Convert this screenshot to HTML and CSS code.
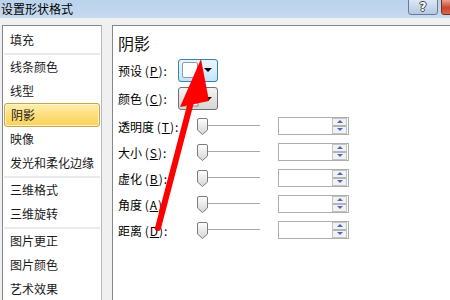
FILE: index.html
```html
<!DOCTYPE html>
<html lang="zh-CN">

<head>
    <meta charset="UTF-8">
    <meta name="viewport" content="width=device-width, initial-scale=1.0">
    <title>设置形状格式</title>
    <link rel="stylesheet" href="styles.css">
</head>

<body>
    <div class="titlebar">
        <span class="title">设置形状格式</span>
        <div class="caption">
            <span class="btn-help">?</span>
            <span class="btn-close"></span>
        </div>
    </div>

    <div class="dialog">
        <ul class="nav">
            <li>填充</li>
            <li class="sep"></li>
            <li>线条颜色</li>
            <li>线型</li>
            <li class="active">阴影</li>
            <li>映像</li>
            <li>发光和柔化边缘</li>
            <li class="sep"></li>
            <li>三维格式</li>
            <li>三维旋转</li>
            <li class="sep"></li>
            <li>图片更正</li>
            <li>图片颜色</li>
            <li>艺术效果</li>
        </ul>

        <div class="pane">
            <h2>阴影</h2>

            <div class="row row-preset">
                <label>预设 <span class="key">(<u>P</u>)</span>:</label>
                <div class="drop drop-blue">
                    <span class="swatch"></span>
                    <span class="caret"></span>
                </div>
            </div>

            <div class="row row-color">
                <label>颜色 <span class="key">(<u>C</u>)</span>:</label>
                <div class="drop">
                    <svg class="bucket" width="18" height="17" viewBox="0 0 18 17">
                        <path d="M3 7 L8 2 L13 7 L8 12 Z" fill="#fff" stroke="#4a6fb0" stroke-width="1" />
                        <path d="M13 7 Q15 10 14 11" fill="none" stroke="#2d5aa8" stroke-width="1.5" />
                        <rect x="1" y="13" width="15" height="3" fill="#fff" stroke="#8a8a8a" stroke-width="1" />
                    </svg>
                    <span class="caret"></span>
                </div>
            </div>

            <div class="row">
                <label>透明度 <span class="key">(<u>T</u>)</span>:</label>
                <div class="slider">
                    <svg class="thumb" width="11" height="17" viewBox="0 0 11 17"><path d="M0.5 2 Q0.5 0.5 2 0.5 H9 Q10.5 0.5 10.5 2 V12 L5.5 16.5 L0.5 12 Z" fill="url(#tg)" stroke="#7c7c7c" /></svg>
                    <span class="track"></span>
                </div>
                <div class="spin"><div class="spinner"><span class="up"></span><span class="mid"></span><span class="down"></span></div></div>
            </div>

            <div class="row">
                <label>大小 <span class="key">(<u>S</u>)</span>:</label>
                <div class="slider">
                    <svg class="thumb" width="11" height="17" viewBox="0 0 11 17"><path d="M0.5 2 Q0.5 0.5 2 0.5 H9 Q10.5 0.5 10.5 2 V12 L5.5 16.5 L0.5 12 Z" fill="url(#tg)" stroke="#7c7c7c" /></svg>
                    <span class="track"></span>
                </div>
                <div class="spin"><div class="spinner"><span class="up"></span><span class="mid"></span><span class="down"></span></div></div>
            </div>

            <div class="row">
                <label>虚化 <span class="key">(<u>B</u>)</span>:</label>
                <div class="slider">
                    <svg class="thumb" width="11" height="17" viewBox="0 0 11 17"><path d="M0.5 2 Q0.5 0.5 2 0.5 H9 Q10.5 0.5 10.5 2 V12 L5.5 16.5 L0.5 12 Z" fill="url(#tg)" stroke="#7c7c7c" /></svg>
                    <span class="track"></span>
                </div>
                <div class="spin"><div class="spinner"><span class="up"></span><span class="mid"></span><span class="down"></span></div></div>
            </div>

            <div class="row">
                <label>角度 <span class="key">(<u>A</u>)</span>:</label>
                <div class="slider">
                    <svg class="thumb" width="11" height="17" viewBox="0 0 11 17"><path d="M0.5 2 Q0.5 0.5 2 0.5 H9 Q10.5 0.5 10.5 2 V12 L5.5 16.5 L0.5 12 Z" fill="url(#tg)" stroke="#7c7c7c" /></svg>
                    <span class="track"></span>
                </div>
                <div class="spin"><div class="spinner"><span class="up"></span><span class="mid"></span><span class="down"></span></div></div>
            </div>

            <div class="row">
                <label>距离 <span class="key">(<u>D</u>)</span>:</label>
                <div class="slider">
                    <svg class="thumb" width="11" height="17" viewBox="0 0 11 17"><path d="M0.5 2 Q0.5 0.5 2 0.5 H9 Q10.5 0.5 10.5 2 V12 L5.5 16.5 L0.5 12 Z" fill="url(#tg)" stroke="#7c7c7c" /></svg>
                    <span class="track"></span>
                </div>
                <div class="spin"><div class="spinner"><span class="up"></span><span class="mid"></span><span class="down"></span></div></div>
            </div>
        </div>
    </div>

    <!-- red annotation arrow drawn over the dialog -->
    <svg class="arrow" width="450" height="300" viewBox="0 0 450 300">
        <defs>
            <linearGradient id="tg" x1="0" y1="0" x2="0" y2="1">
                <stop offset="0" stop-color="#ffffff" />
                <stop offset="1" stop-color="#d4d4d4" />
            </linearGradient>
        </defs>
        <line x1="158" y1="228" x2="191" y2="102" stroke="#ff0000" stroke-width="6" stroke-linecap="round" />
        <polygon points="201,59 180,107 209,101" fill="#ff0000" />
    </svg>
</body>

</html>
```

FILE: styles.css
```css
* {
    box-sizing: border-box;
}

body {
    margin: 0;
    width: 450px;
    height: 300px;
    overflow: hidden;
    position: relative;
    background: #f0f0f0;
    font-family: "Noto Sans CJK SC", "Liberation Sans", sans-serif;
    font-size: 12px;
    color: #000;
}

.titlebar {
    height: 18px;
    display: flex;
    justify-content: space-between;
    background: linear-gradient(#bad2eb, #c6daf0);
}

.title {
    padding-left: 1px;
    line-height: 17px;
    font-size: 12px;
}

.caption {
    display: flex;
    margin-right: -21px;
    gap: 3px;
}

.btn-help {
    width: 30px;
    height: 16px;
    margin-top: -1px;
    border: 1px solid #6b7a93;
    border-radius: 0 0 3px 3px;
    background: linear-gradient(#dbe7f5, #b3c8e4);
    color: #fff;
    font-family: "DejaVu Sans", sans-serif;
    font-weight: bold;
    font-size: 12px;
    line-height: 14px;
    text-align: center;
    text-shadow: 1px 0 #444, -1px 0 #444, 0 1px #444, 0 -1px #444;
}

.btn-close {
    width: 30px;
    height: 16px;
    margin-top: -1px;
    border: 1px solid #7a2a22;
    border-radius: 0 0 3px 3px;
    background: linear-gradient(#e8a393, #c7462f 55%, #d8674e);
}

.dialog {
    display: flex;
    padding-top: 7px;
    height: 282px;
}

.nav {
    list-style: none;
    margin: 0 0 0 2px;
    padding: 2px 0 0 0;
    width: 100px;
    background: #fff;
    border: 1px solid #828790;
    border-right-color: #b5b9c0;
    border-bottom: none;
}

.nav li {
    height: 24px;
    line-height: 23px;
    padding-left: 7px;
    color: #1a1a1a;
}

.nav li.sep {
    height: 3px;
    margin: 0 1px;
    border-bottom: 2px solid #e9e9ef;
}

.nav li.active {
    margin: 0 1px;
    padding-left: 6px;
    border: 1px solid #c8a548;
    border-radius: 3px;
    line-height: 21px;
    background: linear-gradient(#fdeeb0, #fcdc76 55%, #fbd35c);
    box-shadow: inset 0 0 0 1px #fff3c8;
}

.pane {
    flex: 1;
    margin-left: 10px;
    padding-left: 5px;
    background: #fff;
    border-top: 1px solid #828790;
    border-left: 1px solid #828790;
}

.pane h2 {
    margin: 0;
    padding-top: 4px;
    height: 30px;
    line-height: 26px;
    font-size: 16px;
    font-weight: normal;
    color: #111;
}

.row {
    display: flex;
    align-items: center;
    height: 26px;
}

.row label {
    width: 60px;
    white-space: nowrap;
}

.row label .key {
    letter-spacing: 1px;
}

.row-preset {
    height: 28px;
}

.row-color {
    height: 29px;
}

.drop {
    width: 40px;
    height: 23px;
    display: flex;
    align-items: center;
    justify-content: space-between;
    padding: 0 5px 0 3px;
    border: 1px solid #707070;
    border-radius: 3px;
    background: linear-gradient(#f4f4f4, #e4e4e4 50%, #d6d6d6);
}

.drop-blue {
    border-color: #3c7fb1;
    background: linear-gradient(#eaf6fd, #d9f0fc 50%, #bee6fd);
}

.swatch {
    width: 16px;
    height: 16px;
    border: 1px solid #8a9bb0;
    border-radius: 2px;
    background: linear-gradient(135deg, #ffffff 50%, #e6edf5);
}

.bucket {
    display: block;
}

.caret {
    width: 0;
    height: 0;
    border-left: 4px solid transparent;
    border-right: 4px solid transparent;
    border-top: 4px solid #000;
}

.slider {
    display: flex;
    align-items: center;
    width: 63px;
    margin-left: 19px;
}

.thumb {
    display: block;
    flex: none;
}

.track {
    flex: 1;
    height: 1px;
    margin-top: -2px;
    background: #a9a9a9;
}

.spin {
    width: 71px;
    height: 18px;
    margin-left: 18px;
    margin-top: -1px;
    padding: 0 1px;
    display: flex;
    justify-content: flex-end;
    align-items: center;
    border: 1px solid #abadb3;
}

.spinner {
    width: 15px;
    height: 16px;
    display: flex;
    flex-direction: column;
    align-items: center;
    border: 1px solid #c4c4c4;
    background: #f2f2f2;
}

.spinner .up,
.spinner .down {
    flex: 1;
    width: 100%;
    display: flex;
    align-items: center;
    justify-content: center;
}

.spinner .up::after {
    content: "";
    border-left: 3px solid transparent;
    border-right: 3px solid transparent;
    border-bottom: 3px solid #4b68c0;
}

.spinner .down::after {
    content: "";
    border-left: 3px solid transparent;
    border-right: 3px solid transparent;
    border-top: 3px solid #4b68c0;
}

.spinner .mid {
    width: 100%;
    height: 2px;
    background: #b4b4b4;
}

.arrow {
    position: absolute;
    top: 0;
    left: 0;
    pointer-events: none;
}
```
